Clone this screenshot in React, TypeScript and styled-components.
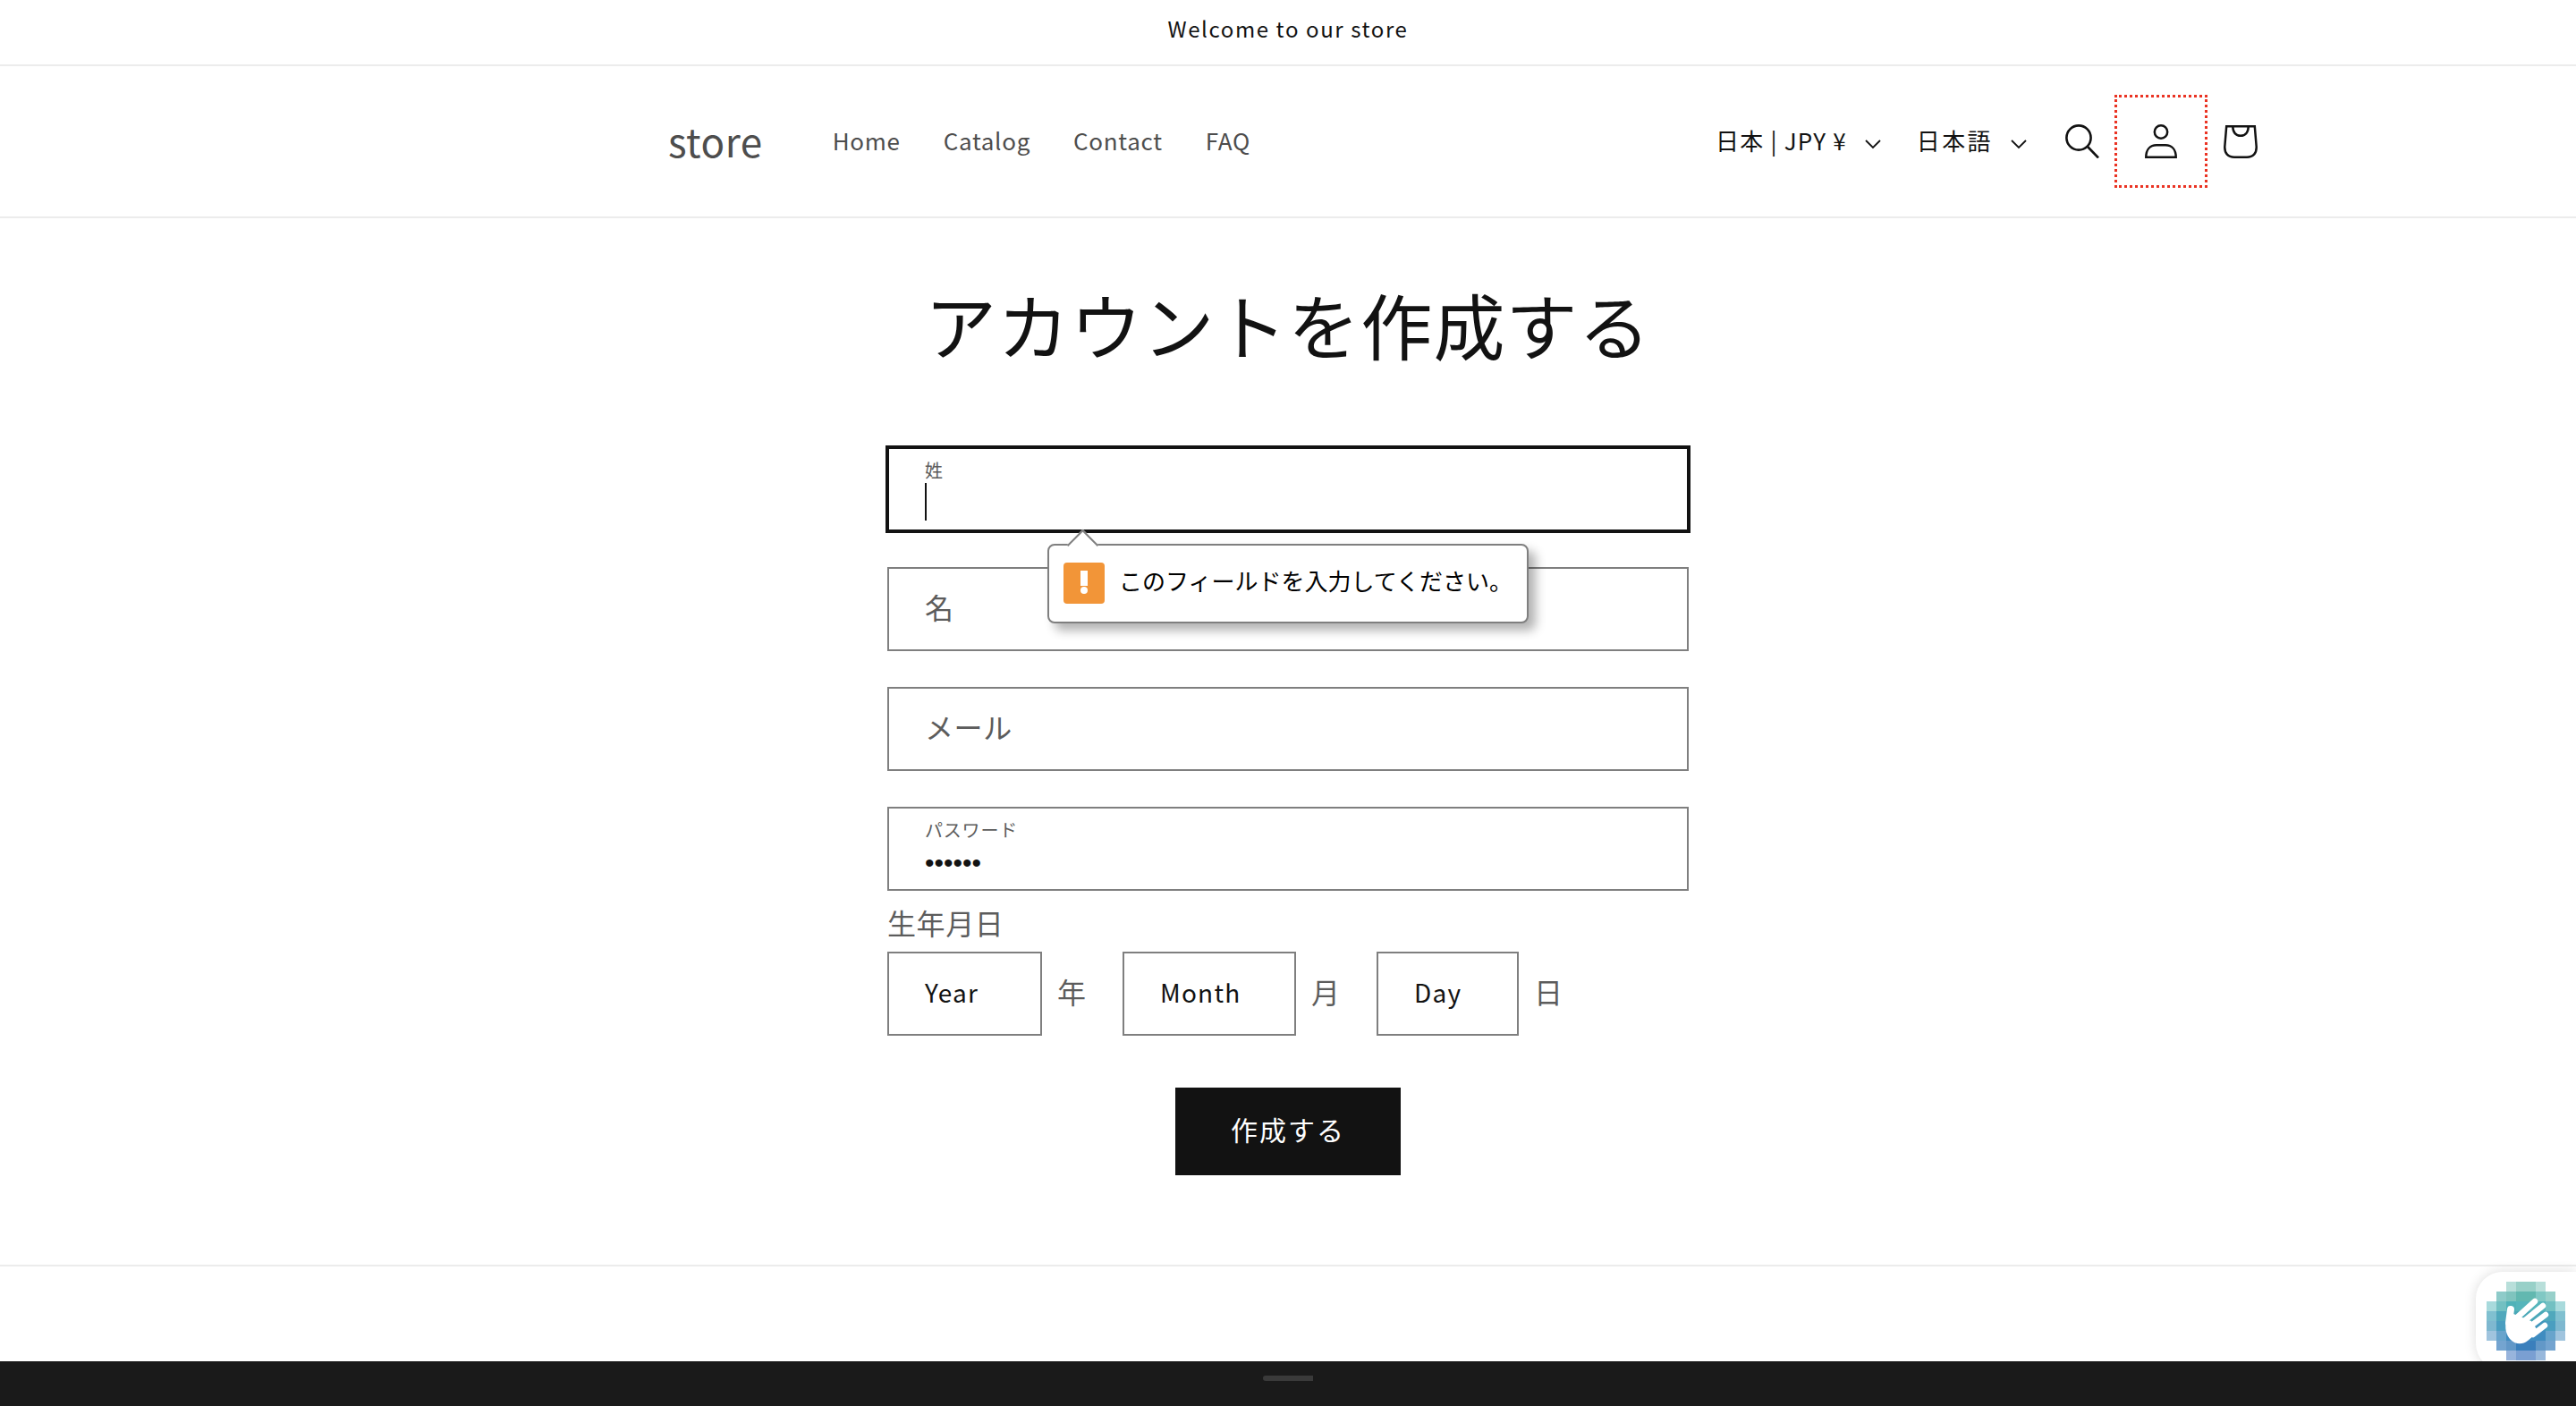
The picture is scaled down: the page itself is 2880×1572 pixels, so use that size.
import React from 'react';
import styled, { createGlobalStyle } from 'styled-components';

const GlobalStyle = createGlobalStyle`
  html, body {
    margin: 0;
    padding: 0;
    background: #fff;
    font-family: "Noto Sans CJK JP", "Noto Sans", sans-serif;
    color: #121212;
  }
  * {
    box-sizing: border-box;
  }
`;

const Page = styled.div`
  position: relative;
  height: 1572px;
  overflow: hidden;
  display: flex;
  flex-direction: column;
`;

const Announcement = styled.div`
  height: 74px;
  border-bottom: 2px solid #ececec;
  display: flex;
  align-items: center;
  justify-content: center;
  font-size: 24px;
  letter-spacing: 1.6px;
  padding-bottom: 9px;
`;

const Header = styled.header`
  height: 170px;
  border-bottom: 2px solid #ececec;
  display: flex;
  align-items: center;
  padding: 0 332px 0 747px;
`;

const Logo = styled.div`
  font-size: 44px;
  letter-spacing: 0.5px;
  color: #4d4d4d;
  margin-right: 78px;
  line-height: 1;
  padding-bottom: 3px;
`;

const Nav = styled.nav`
  display: flex;
  gap: 48px;
  flex: 1;
  padding-bottom: 3px;
`;

const NavLink = styled.a`
  font-size: 26px;
  letter-spacing: 0.7px;
  color: #4d4d4d;
`;

const Localization = styled.button`
  display: flex;
  align-items: center;
  gap: 20px;
  margin-right: 40px;
  padding: 0 0 3px;
  border: 0;
  background: none;
  font: inherit;
  font-size: 26px;
  letter-spacing: 1.2px;
  color: #121212;
  svg {
    margin-top: 10px;
  }
  &:nth-of-type(2) {
    margin-right: 18px;
    letter-spacing: 2.4px;
  }
`;

const IconButton = styled.div<{ $focused?: boolean }>`
  width: 88px;
  height: 88px;
  display: flex;
  align-items: center;
  justify-content: center;
  outline: ${({ $focused }) => ($focused ? '3px dotted #ea3323' : 'none')};
  outline-offset: 5px;
`;

const Main = styled.main`
  display: flex;
  flex-direction: column;
  align-items: center;
  padding: 57px 0 100px;
`;

const Title = styled.h1`
  margin: 0 0 79px;
  font-size: 80px;
  font-weight: 400;
  line-height: 120px;
  letter-spacing: 1.2px;
`;

const Form = styled.form`
  width: 896px;
  display: flex;
  flex-direction: column;
`;

const FieldWrap = styled.div`
  position: relative;
  margin-bottom: 40px;
  &:nth-child(4) {
    margin-bottom: 0;
  }
`;

const Field = styled.div<{ $focused?: boolean }>`
  height: 94px;
  padding: 0 40px;
  border: 2px solid #7f7f7f;
  display: flex;
  flex-direction: column;
  justify-content: center;
  background: #fff;
  ${({ $focused }) => $focused && `
    outline: 2px solid #121212;
    border-color: #121212;
    padding-top: 2px;
  `}
`;

const Placeholder = styled.span`
  font-size: 32px;
  line-height: 40px;
  letter-spacing: 0.6px;
  color: #5c5c5c;
  padding-bottom: 6px;
`;

const SmallLabel = styled.span`
  font-size: 20px;
  line-height: 24px;
  letter-spacing: 0.8px;
  color: #5c5c5c;
`;

const Caret = styled.span`
  width: 2px;
  height: 42px;
  margin-top: 2px;
  background: #121212;
`;

const Dots = styled.span`
  font-family: "Liberation Sans", sans-serif;
  font-size: 30px;
  line-height: 30px;
  margin-top: 10px;
  padding-bottom: 2px;
  color: #121212;
`;

const Bubble = styled.div`
  position: absolute;
  left: 179px;
  top: 108px;
  width: 538px;
  height: 89px;
  z-index: 2;
  display: flex;
  align-items: center;
  gap: 16px;
  padding: 0 0 1px 16px;
  background: #fff;
  border: 2px solid #7f7f7f;
  border-radius: 8px;
  box-shadow: 8px 8px 12px rgba(0, 0, 0, 0.3);
  &::before {
    content: '';
    position: absolute;
    left: 25px;
    top: -13px;
    width: 23px;
    height: 23px;
    background: #fff;
    border-left: 2px solid #7f7f7f;
    border-top: 2px solid #7f7f7f;
    transform: rotate(45deg);
  }
`;

const WarningBadge = styled.span`
  position: relative;
  width: 46px;
  height: 46px;
  flex: none;
  display: flex;
  justify-content: center;
  border-radius: 4px;
  background: #f29538;
  color: #fff;
`;

const BubbleText = styled.span`
  position: relative;
  font-size: 26px;
  line-height: 36px;
  padding-bottom: 7px;
  color: #000;
`;

const DateLabel = styled.div`
  height: 68px;
  display: flex;
  align-items: center;
  padding-top: 2px;
  font-size: 32px;
  letter-spacing: 0.6px;
  color: #5c5c5c;
`;

const DateRow = styled.div`
  display: flex;
  align-items: center;
`;

const DateBox = styled.div<{ $width: number }>`
  width: ${({ $width }) => $width}px;
  height: 94px;
  padding: 0 40px 4px;
  border: 2px solid #7f7f7f;
  display: flex;
  align-items: center;
  font-size: 28px;
  letter-spacing: 1.2px;
  color: #121212;
`;

const DateUnit = styled.span`
  width: 32px;
  margin: 0 41px 0 17px;
  padding-bottom: 7px;
  font-size: 32px;
  color: #5c5c5c;
`;

const Submit = styled.button`
  align-self: center;
  width: 252px;
  height: 98px;
  margin-top: 58px;
  padding: 0 0 7px;
  border: 0;
  background: #121212;
  color: #fff;
  font: inherit;
  font-size: 30px;
  letter-spacing: 2px;
`;

const Footer = styled.footer`
  flex: 1;
  border-top: 2px solid #ececec;
`;

const BottomBar = styled.div`
  position: relative;
  z-index: 3;
  height: 50px;
  background: #1a1a1a;
  display: flex;
  justify-content: center;
  padding-top: 16px;
`;

const Handle = styled.span`
  width: 56px;
  height: 6px;
  border-radius: 3px 0 0 3px;
  background: #3a3a3a;
`;

const ChatWidget = styled.div`
  position: absolute;
  right: 0;
  bottom: 40px;
  width: 112px;
  height: 110px;
  padding: 11px 0 0 12px;
  background: #fff;
  border-radius: 30px 0 0 30px;
  box-shadow: 0 0 14px rgba(0, 0, 0, 0.14);
`;

const Chevron = () => (
  <svg width="18" height="11" viewBox="0 0 18 11" fill="none" stroke="#121212" strokeWidth="1.8">
    <path d="M1 1l8 8 8-8" />
  </svg>
);

const SearchIcon = () => (
  <svg width="38" height="38" viewBox="0 0 38 38" fill="none" stroke="#121212" strokeWidth="2.6">
    <circle cx="15" cy="15" r="13.6" />
    <path d="M25 25l12 12.5" />
  </svg>
);

const UserIcon = () => (
  <svg width="38" height="40" viewBox="0 0 38 40" fill="none" stroke="#121212" strokeWidth="2.5">
    <circle cx="19" cy="9.5" r="7.2" />
    <path d="M2.3 37.7C2.3 29 7 24.3 14 24.3h10c7 0 11.700 4.700 11.700 13.400z" />
  </svg>
);

const CartIcon = () => (
  <svg width="40" height="40" viewBox="0 0 40 40" fill="none" stroke="#121212" strokeWidth="2.5">
    <path d="M5.2 3.2h31.600l1.900 22.800c.3 7.500-3.700 11.700-10.700 11.700H14c-7 0-11-4.200-10.700-11.700z" />
    <path d="M12.3 3.200c0 7 3.500 10.600 8.700 10.600s8.700-3.600 8.700-10.600" />
  </svg>
);

const pixelRows: string[][] = [
  ['', '', '#b8dfda', '#98d0c8', '#98d0c8', '#b8dfda', '', ''],
  ['', '#8ecbc9', '#7fc4be', '#62b8b0', '#62b8b0', '#80c8c4', '#97d0ca', ''],
  ['#a8dadc', '#72c0c2', '#4fb2b8', '#55b5bb', '#55b5bb', '#55b5bb', '#72c0c2', '#a8dadc'],
  ['#80c0d0', '#50a8bc', '#4aa8b8', '#4aa8b8', '#4aa8b8', '#4aa8b8', '#50a8bc', '#80c0d0'],
  ['#7eb8d0', '#4a9ec0', '#4096bc', '#4096bc', '#4096bc', '#4096bc', '#4a9ec0', '#7eb8d0'],
  ['#a0c4de', '#68a4cc', '#3f8cc0', '#3f8cc0', '#3f8cc0', '#3f8cc0', '#68a4cc', '#a0c4de'],
  ['', '#74a4d0', '#6298c8', '#3a7fbc', '#3a7fbc', '#6298c8', '#74a4d0', ''],
  ['', '', '#98b4dc', '#7a9fd2', '#7a9fd2', '#98b8dc', '', ''],
];

const HandLogo = () => (
  <svg width="88" height="88" viewBox="0 0 88 88">
    {pixelRows.map((row, y) =>
      row.map((fill, x) => fill && <rect key={`${x}-${y}`} x={x * 11} y={y * 11} width="11" height="11" fill={fill} />)
    )}
    <g stroke="#fff" strokeWidth="6.5" strokeLinecap="round" fill="none">
      <path d="M33 41L54 22" />
      <path d="M42 44L63 27" />
      <path d="M50 49L66 37" />
      <path d="M52 59L65 49" />
      <path d="M27 31L25 46" strokeWidth="8" />
    </g>
    <path fill="#fff" d="M22 44L30 36 50 44 58 56 46 66C40 71 32 70 27 65 22 60 20 52 22 44z" />
  </svg>
);

const App: React.FC = () => {
  return (
    <Page>
      <GlobalStyle />
      <Announcement>Welcome to our store</Announcement>
      <Header>
        <Logo>store</Logo>
        <Nav>
          <NavLink>Home</NavLink>
          <NavLink>Catalog</NavLink>
          <NavLink>Contact</NavLink>
          <NavLink>FAQ</NavLink>
        </Nav>
        <Localization>日本 | JPY ¥ <Chevron /></Localization>
        <Localization>日本語 <Chevron /></Localization>
        <IconButton><SearchIcon /></IconButton>
        <IconButton $focused><UserIcon /></IconButton>
        <IconButton><CartIcon /></IconButton>
      </Header>
      <Main>
        <Title>アカウントを作成する</Title>
        <Form>
          <FieldWrap>
            <Field $focused>
              <SmallLabel>姓</SmallLabel>
              <Caret />
            </Field>
            <Bubble>
              <WarningBadge>
                <svg width="10" height="36" viewBox="0 0 10 36" fill="#fff">
                  <rect x="1" y="9" width="8" height="17" />
                  <circle cx="5" cy="31" r="4" />
                </svg>
              </WarningBadge>
              <BubbleText>このフィールドを入力してください。</BubbleText>
            </Bubble>
          </FieldWrap>
          <FieldWrap>
            <Field><Placeholder>名</Placeholder></Field>
          </FieldWrap>
          <FieldWrap>
            <Field><Placeholder>メール</Placeholder></Field>
          </FieldWrap>
          <FieldWrap>
            <Field>
              <SmallLabel>パスワード</SmallLabel>
              <Dots>••••••</Dots>
            </Field>
          </FieldWrap>
          <DateLabel>生年月日</DateLabel>
          <DateRow>
            <DateBox $width={173}>Year</DateBox>
            <DateUnit>年</DateUnit>
            <DateBox $width={194}>Month</DateBox>
            <DateUnit>月</DateUnit>
            <DateBox $width={159}>Day</DateBox>
            <DateUnit>日</DateUnit>
          </DateRow>
          <Submit type="button">作成する</Submit>
        </Form>
      </Main>
      <Footer />
      <ChatWidget><HandLogo /></ChatWidget>
      <BottomBar><Handle /></BottomBar>
    </Page>
  );
};

export default App;
